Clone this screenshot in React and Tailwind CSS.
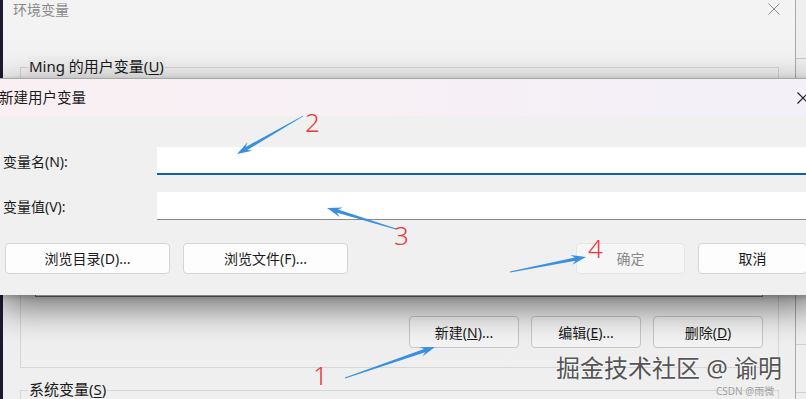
import React from "react";

function Arrow({ x1, y1, x2, y2 }) {
  const dx = x2 - x1, dy = y2 - y1, L = Math.hypot(dx, dy);
  const ux = dx / L, uy = dy / L, nx = -uy, ny = ux;
  const p = (x, y) => `${x.toFixed(1)},${y.toFixed(1)}`;
  const neckX = x2 - ux * 11, neckY = y2 - uy * 11;
  const baseX = x2 - ux * 15, baseY = y2 - uy * 15;
  const pts = [
    p(x1 + nx * 0.4, y1 + ny * 0.4),
    p(neckX + nx * 1.7, neckY + ny * 1.7),
    p(baseX + nx * 5, baseY + ny * 5),
    p(x2, y2),
    p(baseX - nx * 5, baseY - ny * 5),
    p(neckX - nx * 1.7, neckY - ny * 1.7),
    p(x1 - nx * 0.4, y1 - ny * 0.4),
  ].join(" ");
  return <polygon points={pts} fill="#3a8fdf" />;
}

function WinBtn({ children, className = "" }) {
  return (
    <div className={"shrink-0 flex items-center justify-center rounded-[4px] border text-[14px] " + className}>
      {children}
    </div>
  );
}

export default function App() {
  return (
    <div className="relative w-[806px] h-[399px] overflow-hidden bg-[#f0f0f0] flex font-['Noto_Sans','Noto_Sans_CJK_SC',sans-serif] text-[#1a1a1a]">
      {/* desktop strip */}
      <div className="shrink-0 w-[3px] h-full bg-[#1d1a30]" />

      {/* environment variables window */}
      <div className="shrink-0 w-[792px] h-full overflow-hidden flex flex-col bg-gradient-to-b from-[#f3f3f3] to-[#efefef]">
        <div className="shrink-0 h-[22px] flex items-start justify-between pl-[10px] pr-[15px]">
          <span className="text-[14px] leading-[20px] text-[#8a8a8a]">环境变量</span>
          <svg width="12" height="12" viewBox="0 0 12 12" className="mt-[3px]">
            <path d="M0.5 0.5 L11.5 11.5 M11.5 0.5 L0.5 11.5" stroke="#8c8c8c" strokeWidth="1" fill="none" />
          </svg>
        </div>

        {/* user variables group */}
        <div className="shrink-0 relative mt-[45px] ml-[17px] w-[759px] h-[301px] border border-[#d6d6d6] px-[14px] pt-[21px] flex flex-col">
          <span className="absolute left-[7px] top-[-12px] px-[1px] bg-[#efefef] text-[15px] leading-[20px]">
            Ming 的用户变量(<span className="underline underline-offset-2">U</span>)
          </span>
          <div className="shrink-0 w-[728px] h-[208px] border border-[#7f7f7f] bg-white" />
          <div className="shrink-0 w-[728px] mt-[19px] flex justify-end gap-[12px]">
            <WinBtn className="w-[110px] h-[32px] bg-[#f4f4f4] border-[#c6c6c6]">
              新建(<span className="underline">N</span>)...
            </WinBtn>
            <WinBtn className="w-[110px] h-[32px] bg-[#f4f4f4] border-[#c6c6c6]">
              编辑(<span className="underline">E</span>)...
            </WinBtn>
            <WinBtn className="w-[110px] h-[32px] bg-[#f4f4f4] border-[#c6c6c6]">
              删除(<span className="underline">D</span>)
            </WinBtn>
          </div>
        </div>

        {/* system variables group */}
        <div className="shrink-0 relative mt-[22px] ml-[17px] w-[759px] h-[100px] border border-[#d6d6d6]">
          <span className="absolute left-[7px] top-[-12px] px-[1px] bg-[#efefef] text-[15px] leading-[20px]">
            系统变量(<span className="underline underline-offset-2">S</span>)
          </span>
        </div>
      </div>

      {/* window behind on the right */}
      <div className="flex-1 h-full border-l border-[#aaaaaa] bg-[#efefef] flex flex-col">
        <div className="shrink-0 h-[59px] border-b border-[#c8c8c8]" />
        <div className="shrink-0 h-[286px] border-b border-[#d0d0d0]" />
        <div className="shrink-0 h-[48px] border-b border-[#d0d0d0]" />
      </div>

      {/* new user variable dialog */}
      <div className="absolute left-0 top-[78px] w-[820px] h-[217px] bg-[#f0f0f0] border-t border-[#a8a8a8] shadow-[0_12px_34px_rgba(0,0,0,0.55),0_2px_6px_rgba(0,0,0,0.2)] flex flex-col">
        <div className="shrink-0 h-[37px] flex items-center justify-between bg-gradient-to-r from-[#faf0f3] to-[#f3f0f8] pr-[11px]">
          <span className="ml-[-1px] text-[14.5px] leading-[20px] mb-[1px]">新建用户变量</span>
          <svg width="12" height="12" viewBox="0 0 12 12">
            <path d="M0.5 0.5 L11.5 11.5 M11.5 0.5 L0.5 11.5" stroke="#1a1a1a" strokeWidth="1.1" fill="none" />
          </svg>
        </div>
        <div className="flex flex-col pt-[31px]">
          <div className="flex items-center h-[28px]">
            <span className="w-[157px] pl-[3px] text-[14px]">变量名(N):</span>
            <div className="w-[652px] h-[28px] bg-white border-b-2 border-[#0a60b6]" />
          </div>
          <div className="flex items-center h-[28px] mt-[17px]">
            <span className="w-[157px] pl-[3px] text-[14px]">变量值(V):</span>
            <div className="w-[652px] h-[28px] bg-white border-b border-[#8a8a8a]" />
          </div>
          <div className="flex mt-[23px] h-[31px]">
            <WinBtn className="ml-[5px] w-[165px] h-[31px] bg-[#fdfdfd] border-[#d4d4d4]">浏览目录(D)...</WinBtn>
            <WinBtn className="ml-[13px] w-[165px] h-[31px] bg-[#fdfdfd] border-[#d4d4d4]">浏览文件(F)...</WinBtn>
            <WinBtn className="ml-[228px] w-[109px] h-[31px] bg-[#f6f6f6] border-[#e6e6e6] text-[#8a8a8a]">确定</WinBtn>
            <WinBtn className="ml-[13px] w-[109px] h-[31px] bg-[#fdfdfd] border-[#d4d4d4]">取消</WinBtn>
          </div>
        </div>
      </div>

      {/* watermark */}
      <div className="absolute left-[556px] top-[352px] text-[24px] leading-[32px] text-[#555555] [text-shadow:0_0_2px_#ffffff,0_0_1px_#ffffff] whitespace-nowrap">
        掘金技术社区 @ 谕明
      </div>
      <div className="absolute left-[716px] top-[385px] text-[10px] leading-[12px] text-[#9a9a9a] [text-shadow:0_0_1px_#ffffff] whitespace-nowrap">
        CSDN @雨微
      </div>

      {/* annotations */}
      <svg className="absolute inset-0 pointer-events-none" width="806" height="399" viewBox="0 0 806 399">
        <Arrow x1={345} y1={378} x2={435} y2={347} />
        <Arrow x1={303} y1={116} x2={237} y2={154} />
        <Arrow x1={396} y1={229} x2={327} y2={208} />
        <Arrow x1={510} y1={272} x2={586} y2={257} />
        <g fill="#e83b3b" fontFamily="Noto Sans, sans-serif" fontSize="26" fontWeight="300">
          <text x="305" y="132">2</text>
          <text x="394" y="245">3</text>
          <text x="588" y="258">4</text>
          <text x="313" y="385">1</text>
        </g>
      </svg>
    </div>
  );
}
